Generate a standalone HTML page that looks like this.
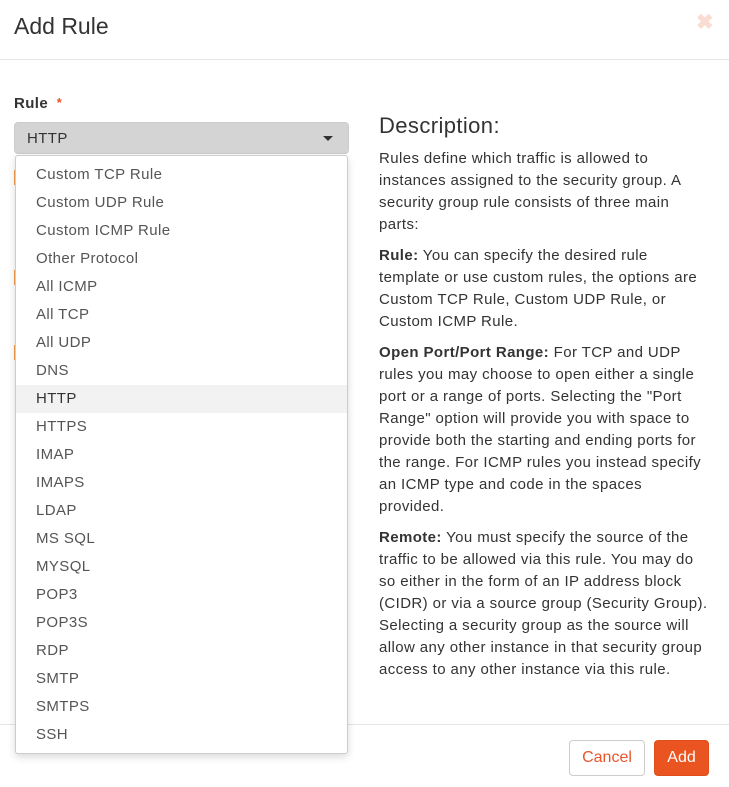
<!DOCTYPE html>
<html><head><style>
body{margin:0;width:729px;height:787px;background:#fff;font-family:Arial,"Liberation Sans",Helvetica,sans-serif;position:relative;overflow:hidden;color:#333;letter-spacing:0.4px}
.a{position:absolute}
h1{position:absolute;left:14px;top:13px;margin:0;font-size:23px;font-weight:normal;color:#333;letter-spacing:0}
.close{left:696px;top:10px;font-size:21px;color:#fbdcd2;font-weight:bold}
.hr{left:0;width:729px;height:1px;background:#e5e5e5}
.lbl{left:14px;top:95px;font-size:15px;font-weight:bold;color:#333}
.sel{left:14px;top:122px;width:335px;height:32px;background:#d4d4d4;border-radius:4px;box-sizing:border-box;border:1px solid #ccc}
.sel span{position:absolute;left:12px;top:7px;font-size:15px;color:#333}
.caret{position:absolute;right:15px;top:13px;width:0;height:0;border-left:5px solid transparent;border-right:5px solid transparent;border-top:5px solid #333}
.dd{left:15px;top:155px;width:333px;height:599px;border:1px solid #ccc;border-radius:3px;background:#fff;box-sizing:border-box;box-shadow:0 3px 8px rgba(0,0,0,.15);z-index:2}
.dd div{height:28px;line-height:28px;padding-left:20px;font-size:15px;color:#555}
.dd .on{background:#f2f2f2;color:#333}
.desc{left:379px;top:112px;width:345px;font-size:15px;line-height:22px;color:#333;white-space:nowrap}
.desc h3{font-size:22px;font-weight:normal;margin:0 0 8px 0;line-height:28px}
.desc p{margin:0 0 9px 0}
.btn{top:740px;height:36px;border-radius:4px;box-sizing:border-box;font-size:16px;line-height:34px;text-align:center;letter-spacing:0}
</style></head><body>
<h1>Add Rule</h1>
<div class="a close">✖</div>
<div class="a hr" style="top:59px"></div>
<div class="a lbl">Rule <span style="color:#e8552a;font-size:13px;vertical-align:top;margin-left:4px">*</span></div>
<div class="a" style="left:14px;top:170px;width:2px;height:15px;background:#f0a050"></div>
<div class="a" style="left:14px;top:270px;width:2px;height:15px;background:#f0a050"></div>
<div class="a" style="left:14px;top:345px;width:2px;height:15px;background:#f0a050"></div>
<div class="a sel"><span>HTTP</span><i class="caret"></i></div>
<div class="a dd">
<div style="margin-top:5px">Custom TCP Rule</div><div>Custom UDP Rule</div><div>Custom ICMP Rule</div><div>Other Protocol</div><div>All ICMP</div><div>All TCP</div><div>All UDP</div><div>DNS</div><div class="on">HTTP</div><div>HTTPS</div><div>IMAP</div><div>IMAPS</div><div>LDAP</div><div>MS SQL</div><div>MYSQL</div><div>POP3</div><div>POP3S</div><div>RDP</div><div>SMTP</div><div>SMTPS</div><div>SSH</div>
</div>
<div class="a desc">
<h3>Description:</h3>
<p>Rules define which traffic is allowed to<br>instances assigned to the security group. A<br>security group rule consists of three main<br>parts:</p>
<p><b>Rule:</b> You can specify the desired rule<br>template or use custom rules, the options are<br>Custom TCP Rule, Custom UDP Rule, or<br>Custom ICMP Rule.</p>
<p><b>Open Port/Port Range:</b> For TCP and UDP<br>rules you may choose to open either a single<br>port or a range of ports. Selecting the "Port<br>Range" option will provide you with space to<br>provide both the starting and ending ports for<br>the range. For ICMP rules you instead specify<br>an ICMP type and code in the spaces<br>provided.</p>
<p><b>Remote:</b> You must specify the source of the<br>traffic to be allowed via this rule. You may do<br>so either in the form of an IP address block<br>(CIDR) or via a source group (Security Group).<br>Selecting a security group as the source will<br>allow any other instance in that security group<br>access to any other instance via this rule.</p>
</div>
<div class="a hr" style="top:724px"></div>
<div class="a btn" style="left:569px;width:76px;border:1px solid #ccc;color:#e8552a">Cancel</div>
<div class="a btn" style="left:654px;width:55px;background:#e95420;color:#fff;border:1px solid #e04e1b">Add</div>
</body></html>
